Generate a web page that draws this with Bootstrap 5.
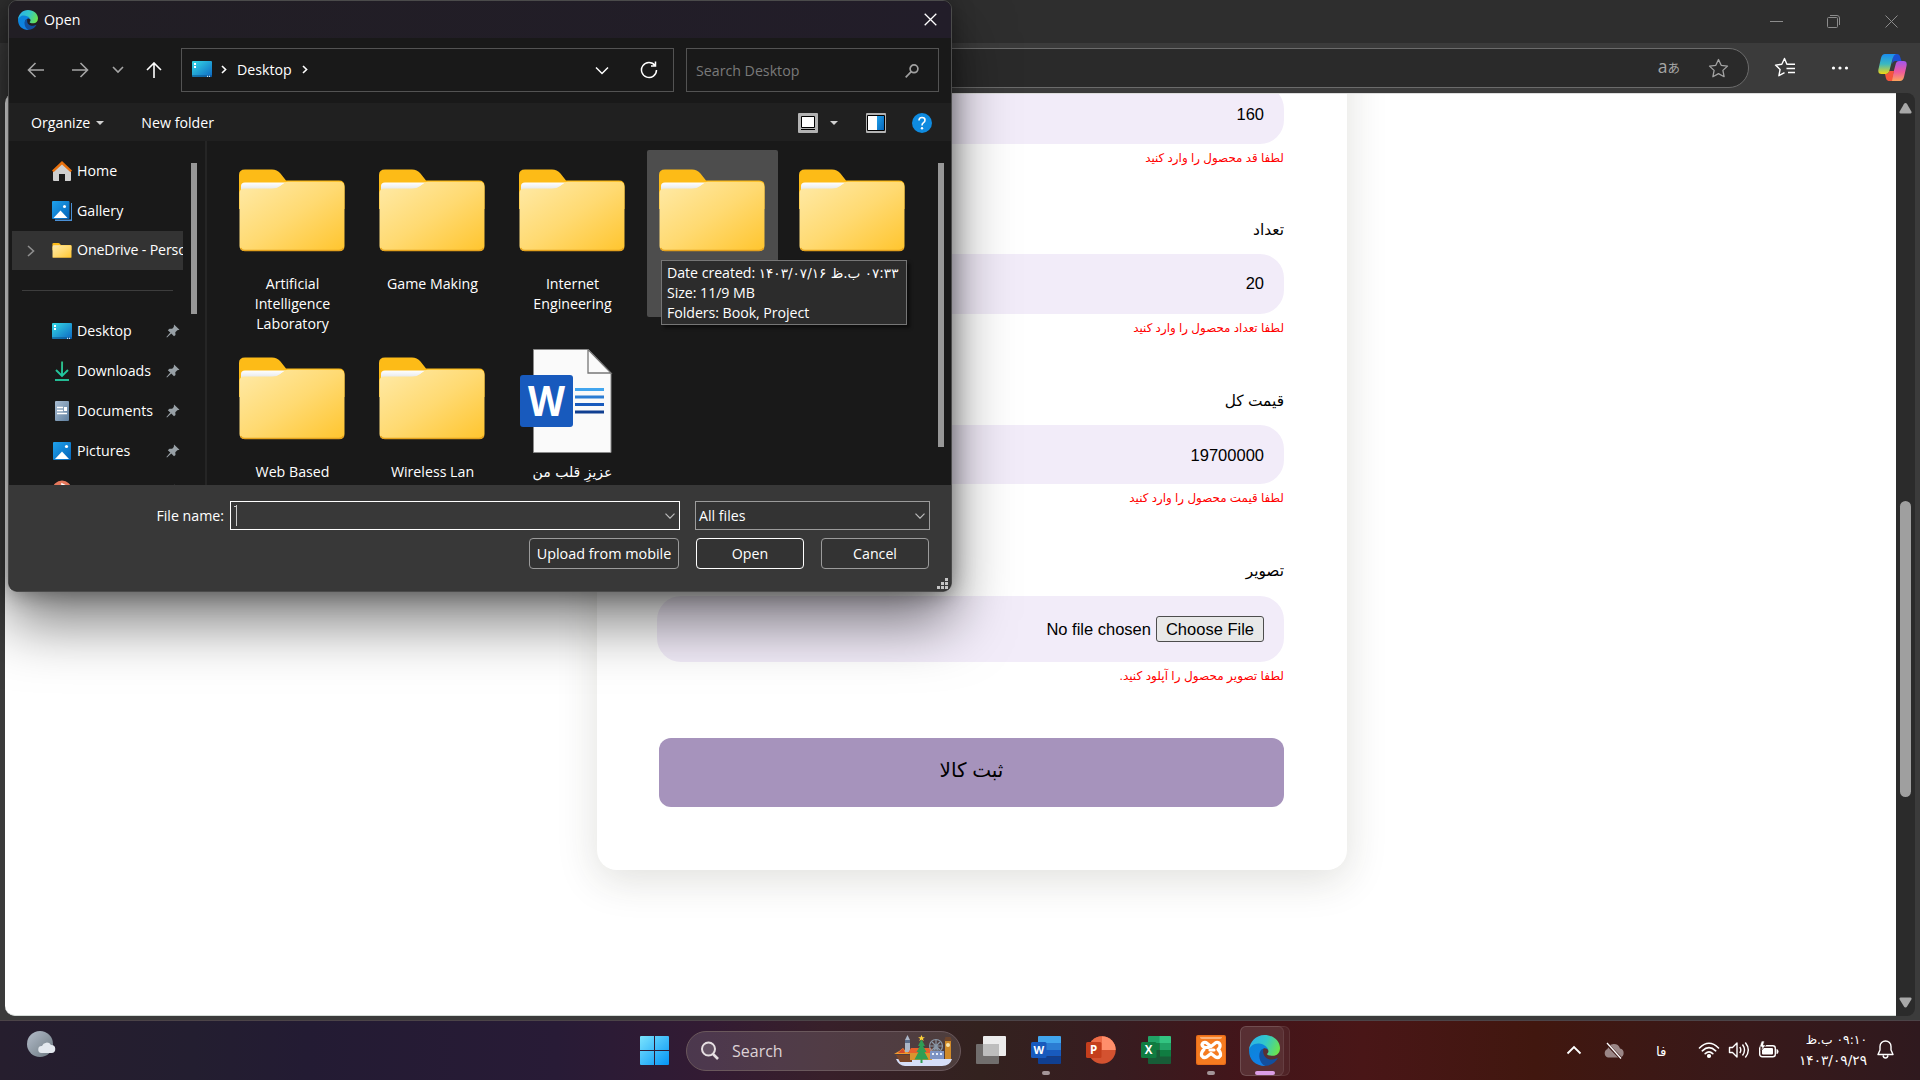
<!DOCTYPE html>
<html lang="en">
<head>
<meta charset="utf-8">
<title>Open</title>
<link href="https://cdn.jsdelivr.net/npm/bootstrap@5.3.0/dist/css/bootstrap.min.css" rel="stylesheet">
<style>
body{width:1920px;height:1080px;overflow:hidden;background:#3b3b3b;font-family:"Open Sans","DejaVu Sans",sans-serif;font-size:14.2px;line-height:20px;color:#fff}
svg{display:block;flex:none}
.win-title{height:43px;background:#2e2e2e;padding-right:21px}
.win-tools{height:50px;background:#3b3b3b;padding-right:13px}
.addr-pill{height:40px;width:1000px;margin-top:5px;border:1px solid #6b6b6b;border-radius:20px;background:#2a2a2a;padding-right:20px}
.viewport-area{height:923px;padding:0 5px}
.page-view{background:#fff;border-radius:10px 0 0 10px;overflow:hidden;border-bottom:1px solid #d5dcd8;border-top:1px solid #ddd}
.page-scroll{width:19px;background:#2b2b2b;border-radius:0 8px 8px 0;padding:10px 0 8px}
.page-thumb{width:11px;height:296px;border-radius:6px;background:#9f9f9f}
.goods-form{width:750px;height:871px;margin:-95px 0 0 592px;padding:86px 63px 0 60px;background:#fff;border-radius:20px;box-shadow:0 10px 40px rgba(50,48,30,.15);color:#000;font-family:"Liberation Sans","DejaVu Sans",sans-serif}
.fld{background:#f2ecf9;border-radius:24px;height:59.5px;padding-right:20px;font-size:16.5px}
.fld-first{height:58.5px;padding-top:0}
.fld-qty{padding-bottom:2px}
.fld-file{height:66px}
.pick-btn{height:26px;border:1px solid #4d4d4d;border-radius:3px;background:#e8e8e8;padding:0 9px;line-height:24px}
.err-line{color:#f00;height:20px;font-size:11.9px;margin-top:4px;white-space:nowrap}
.lbl-line{height:26px;font-size:15.4px;margin:53px 0 8.2px;white-space:nowrap}
.send-btn{height:69px;margin:52px 0 0 2px;border-radius:12px;background:#a693bc;font-size:20px;color:#000;padding-bottom:5px}
/* file dialog */
.dlg{position:absolute;left:8px;top:0;width:944px;height:592px;border:1px solid #4b4b4b;border-radius:9px;background:#191919;overflow:hidden}
.dlg-shadow{position:absolute;left:8px;top:0;width:944px;height:592px;border-radius:9px;box-shadow:0 30px 60px rgba(0,0,0,.52),0 2px 21px rgba(0,0,0,.35)}
.dlg-title{height:37px;background:linear-gradient(90deg,#211e24,#221d29);padding:0 14px 0 9px}
.dlg-nav{height:65px;padding:0 12px 0 18px}
.dlg-box{border:1px solid #535353;height:44px}
.dlg-box>span{margin-top:-1px}
.dlg-tools{height:38px;background:#202020;padding:1px 19px 0 22px}
.dlg-main{height:344px;overflow:hidden}
.side-pane{width:174px;padding-left:3px;overflow:hidden}
.side-row{height:40px;padding-left:40px;white-space:nowrap;width:171px;overflow:hidden;position:relative}
.side-row svg{margin-right:5px}
.side-row .pin{margin:0 3px 0 auto}
.side-row.hot{background:#333;height:39px}
.side-row .exp{position:absolute;left:15px;top:14px}
.side-sep{height:1px;background:#3d3d3d;margin:20px 10px 20px}
.side-scroll{width:23px;padding:22px 0 0 8px}
.thumb-bar{width:6px;background:#979797}
.pane-div{width:2px;background:#252525;margin:0 20px 0 -1px}
.file-grid{width:704px;padding-top:9px;display:grid;grid-template-columns:repeat(5,131px);column-gap:9px;grid-template-rows:167px 167px;row-gap:21px}
.file-cell{padding-top:18.500px;text-align:center}
.file-cell.hot{background:#4d4d4d;border-radius:2px}
.file-cell svg{margin:0 auto 22.500px;position:relative;left:-.5px}
.dlg-foot{height:107px;background:#383838;padding:16px 21px 0 0}
.foot-in{height:29px;border:1px solid #9b9b9b;background:#333;padding:0 4px}
.foot-btn{height:31px;border:1px solid #9b9b9b;border-radius:4px;background:#333;width:108px}
.tip{position:absolute;left:661px;top:260px;width:246px;height:65px;border:1px solid #767676;background:#2c2c2c;padding:2px 5px;box-shadow:3px 3px 3px rgba(0,0,0,.5);white-space:nowrap;color:#fff;letter-spacing:-.05px}
.tip div{height:20px}
/* taskbar */
.tbar{height:60px;border-top:1px solid #4c4448;background:linear-gradient(90deg,#261e2e 0,#231e30 10%,#231b33 16%,#281b36 29%,#331b33 37%,#38202a 43%,#33221f 51%,#371c20 58%,#43151a 65%,#491617 71%,#41170f 80%,#38191a 91%,#2f191e 100%)}
.slot{width:55px;height:58px;position:relative}
.slot svg{margin-top:-1px}
.slot .dotm{position:absolute;left:50%;bottom:5px;width:8px;margin-left:-4px;height:4px;border-radius:2px;background:#a39598}
.slot .dotm.on{width:20px;margin-left:-10px;background:#dc9fe6}
.find-pill{width:275px;height:40px;border-radius:20px;border:1px solid #6a585c;background:rgba(255,255,255,.13);margin:0 2px 0 4px;padding:0 7px 0 15px;font-size:16px}
.app-hot{position:absolute;left:1px;top:4px;width:50px;height:50px;border-radius:6px;background:rgba(255,255,255,.06);border:1px solid rgba(255,255,255,.08)}
.app-hot.front{width:44px}
.clock{width:70px;direction:rtl;font-size:13.7px;font-family:"DejaVu Sans",sans-serif;white-space:nowrap;line-height:20px}
.fa-t{font-family:"DejaVu Sans",sans-serif}
</style>
<script src="https://cdn.jsdelivr.net/npm/bootstrap@5.3.0/dist/js/bootstrap.bundle.min.js"></script>
</head>
<body>
<svg width="0" height="0" class="position-absolute"><defs>
<linearGradient id="gf" x1="0" y1="0" x2="1" y2="1"><stop offset="0" stop-color="#ffeaa8"/><stop offset=".5" stop-color="#ffda72"/><stop offset="1" stop-color="#ffc52e"/></linearGradient>
<linearGradient id="gp" x1="0" y1="0" x2="0" y2="1"><stop offset="0" stop-color="#fff"/><stop offset="1" stop-color="#d8dbe0"/></linearGradient>
<linearGradient id="gd" x1="0" y1="0" x2="1" y2="1"><stop offset="0" stop-color="#36dbe6"/><stop offset="1" stop-color="#0c66c2"/></linearGradient>
<linearGradient id="gb" x1="0" y1="0" x2="1" y2="1"><stop offset="0" stop-color="#1fa2ec"/><stop offset="1" stop-color="#0563b8"/></linearGradient>
<linearGradient id="ge1" x1="0" y1=".3" x2="1" y2=".6"><stop offset="0" stop-color="#2cb1ea"/><stop offset=".5" stop-color="#32c8c9"/><stop offset="1" stop-color="#6be34c"/></linearGradient>
<linearGradient id="ge2" x1="0" y1="0" x2=".6" y2="1"><stop offset="0" stop-color="#0a86d6"/><stop offset="1" stop-color="#1180e8"/></linearGradient>
<linearGradient id="gw" x1="0" y1="0" x2="1" y2="1"><stop offset="0" stop-color="#7be4fd"/><stop offset="1" stop-color="#0494f5"/></linearGradient>
<linearGradient id="gdoc" x1="0" y1="0" x2="1" y2="1"><stop offset="0" stop-color="#a9bdd2"/><stop offset="1" stop-color="#5f7f9f"/></linearGradient>
<linearGradient id="gdl" x1="0" y1="0" x2="0" y2="1"><stop offset="0" stop-color="#2fbd85"/><stop offset="1" stop-color="#1fc7a4"/></linearGradient>
<linearGradient id="gc1" x1="0" y1="0" x2="0" y2="1"><stop offset="0" stop-color="#1a8df0"/><stop offset=".5" stop-color="#3bb8c0"/><stop offset="1" stop-color="#f2d612"/></linearGradient>
<linearGradient id="gc2" x1="0" y1="0" x2="0" y2="1"><stop offset="0" stop-color="#a156ee"/><stop offset=".55" stop-color="#ef5a9c"/><stop offset="1" stop-color="#fca55c"/></linearGradient>
<symbol id="folder" viewBox="0 0 106 83"><path d="M0 6Q0 .5 6 .5H33Q38 .5 41.500 4.500L47 11.500H100Q105.500 11.500 105.500 17V40H0z" fill="#fdbb17"/><path d="M2 24V17Q2 13.500 6 13.500H47L39 19Q37 20.500 34 20.500H6z" fill="url(#gp)"/><path d="M.5 24Q.5 19.800 5.500 19.600H33Q38 19.600 41 17.300L46 13.500Q47 12.800 49 12.800H100Q105.500 12.800 105.500 18V77Q105.500 82 100 82H6Q.5 82 .5 77z" fill="url(#gf)"/><path d="M1.500 79Q3 81.600 6 81.600H100Q103 81.600 104.700 79" fill="none" stroke="#e3a11d" stroke-width="1.500"/></symbol>
<symbol id="edge" viewBox="0 0 24 24"><path d="M22.300 17.800C20.500 21.500 16.500 24 12 24 5 22 6.500 13 11.500 9.500 9.500 15 13 19.300 18 19 20 18.800 21.500 18 22.300 17.800z" fill="#124f9e"/><path d="M0 12C0 7.500 4 6 8 6 12 6 15 9 15 12 14 10 11.500 9.500 9.500 11.500 6.500 15 8 22 12.500 24 5 24 0 19 0 12z" fill="url(#ge2)"/><path d="M0 11.500C.7 5 5.500 0 12 0 19 0 24 5 24 10 24 14 21.500 16 18.500 16 15.500 16 13.800 15.300 14 14.500 15.500 13.300 15.200 11.800 14.300 10.300 12.500 7.500 9.500 6.600 7 6.600 3.500 6.700 1 8.700 0 11.500z" fill="url(#ge1)"/></symbol>
<symbol id="pinS" viewBox="0 0 14 14"><path d="M8 .5l5.500 5.200-2.200.6-2 2 .2 2.700-1.500 1.300-2.700-2.800L1 13.500l-.6-.6 3.900-4.400L1.800 6.200 3.500 4.700l2.700.1 1.600-1.900z" fill="#98a0a6"/></symbol>
<symbol id="deskS" viewBox="0 0 20 16"><rect width="20" height="16" rx="1" fill="url(#gd)"/><path d="M2 2h2v2H2zM2 5h2v2H2z" fill="#fff"/><path d="M0 15h20" stroke="#0a4f86" stroke-width="1"/><path d="M15 15.300h1m1 0h1" stroke="#fff"/></symbol>
</defs></svg>

<div class="d-flex flex-column vh-100">
  <header class="win-title d-flex justify-content-end align-items-center">
    <svg width="130" height="16" viewBox="0 0 130 16" fill="none" stroke="#8c8c8c"><path d="M1 7.500h13"/><path d="M58.500 4.500q0-1 1-1h8q1 0 1 1v8q0 1-1 1h-8q-1 0-1-1zM61 1.500h7q2.500 0 2.500 2.500v7"/><path d="M116.500 1.500l12 12m0-12l-12 12"/></svg>
  </header>
  <div class="win-tools d-flex justify-content-end">
    <div class="addr-pill d-flex justify-content-end align-items-center">
      <div class="d-flex align-items-baseline" style="color:#a6a6a6;font:17px 'Open Sans','Noto Sans CJK JP',sans-serif;margin:-4px 28px 0 0;height:26px;line-height:26px"><span style="font-size:17.500px;line-height:26px">a</span><span style="font-size:12.5px;line-height:20px">あ</span></div>
      <svg width="21" height="21" viewBox="0 0 21 21" fill="none" stroke="#a3a3a3" stroke-width="1.300" stroke-linejoin="round" style="margin-right:-1px"><path d="M10.500 1.500l2.700 5.800 6.300.8-4.600 4.300 1.200 6.300-5.600-3.100-5.600 3.100 1.200-6.300L1.500 8.100l6.300-.8z"/></svg>
    </div>
    <div class="d-flex align-items-center" style="padding-left:25px;margin-top:-1px">
      <svg width="22" height="21" viewBox="0 0 22 21" fill="none" stroke="#fff" stroke-width="1.400" stroke-linejoin="round"><path d="M13.500 7.300l-.6-.1L10.500 1.500 7.800 7.300 1.500 8.100l4.600 4.300-1.200 6.300 5.600-3.100M13.500 7.300H21M12.500 11.500H21M14 15.500h7"/></svg>
      <svg width="18" height="6" viewBox="0 0 18 6" fill="#fff" style="margin:0 29px 0 35px"><circle cx="2.500" cy="3" r="1.600"/><circle cx="9" cy="3" r="1.600"/><circle cx="15.500" cy="3" r="1.600"/></svg>
      <svg width="29" height="27" viewBox="0 0 29 27"><path d="M15 0h4q2.500 0 3.200 3l1.300 4H17.500q-2.500 0-3.500 3z" fill="#1b4fd0"/><path d="M7 0h11q-2.500 1-3.200 4L11 18q-.8 2-3 2H3.500Q-.5 20 .5 15L3 4Q4 0 7 0z" fill="url(#gc1)"/><path d="M22 27H11q2.500-1 3.200-4L18 9q.8-2 3-2h4.500q4 0 3 5L26 23q-1 4-4 4z" fill="url(#gc2)"/><path d="M14 27h-3.500q-2 0-2.600-3L7 20h1q2.500 0 3.300-3H16z" fill="#f5553c"/></svg>
    </div>
  </div>
  <main class="viewport-area d-flex">
    <div class="page-view flex-grow-1">
      <form class="goods-form" dir="rtl">
        <div class="fld fld-first d-flex align-items-center">160</div>
        <div class="err-line">لطفا قد محصول را وارد کنید</div>
        <div class="lbl-line" style="margin-top:52.500px">تعداد</div>
        <div class="fld fld-qty d-flex align-items-center">20</div>
        <div class="err-line">لطفا تعداد محصول را وارد کنید</div>
        <div class="lbl-line">قیمت کل</div>
        <div class="fld d-flex align-items-center">19700000</div>
        <div class="err-line">لطفا قیمت محصول را وارد کنید</div>
        <div class="lbl-line">تصویر</div>
        <div class="fld fld-file d-flex align-items-center"><span class="pick-btn">Choose File</span><span style="margin-right:5px">No file chosen</span></div>
        <div class="err-line" style="font-size:12.1px">لطفا تصویر محصول را آپلود کنید.</div>
        <div class="send-btn d-flex justify-content-center align-items-center">ثبت کالا</div>
      </form>
    </div>
    <div class="page-scroll d-flex flex-column align-items-center">
      <svg width="13" height="11" viewBox="0 0 13 11"><path d="M6.500 0q1 0 1.700 1.200l4.300 7.600Q13 10.500 11.500 10.500h-10Q0 10.500.5 8.800L4.800 1.200Q5.500 0 6.500 0z" fill="#a8a8a8"/></svg>
      <div class="page-thumb" style="margin-top:387px"></div>
      <svg class="mt-auto" width="13" height="11" viewBox="0 0 13 11"><path d="M6.500 10.500q1 0 1.700-1.200l4.300-7Q13 .5 11.500.5h-10Q0 .5.5 2.300l4.300 7Q5.500 10.500 6.500 10.500z" fill="#a8a8a8"/></svg>
    </div>
  </main>
  <footer class="tbar mt-auto d-flex align-items-center">
    <svg width="29" height="27" viewBox="0 0 29 27" style="margin:-13px 0 0 27px"><defs><linearGradient id="gm" x1="0" y1="0" x2="1" y2="1"><stop offset="0" stop-color="#b4bdca"/><stop offset="1" stop-color="#6b7880"/></linearGradient></defs><circle cx="13" cy="13" r="13" fill="url(#gm)"/><path d="M14.500 22a3.500 3.500 0 01.5-7 5 5 0 019-1 4 4 0 01.5 8z" fill="#e3e8ee"/></svg>
    <div class="d-flex align-items-center" style="margin-left:571px">
      <div class="slot d-flex align-items-center justify-content-center"><svg width="29" height="29" viewBox="0 0 29 29"><path d="M0 1q0-1 1-1h13v14H0zM15 0h13q1 0 1 1v13H15zM0 15h14v14H1q-1 0-1-1zM15 15h14v13q0 1-1 1H15z" fill="url(#gw)"/></svg></div>
      <div class="find-pill d-flex align-items-center">
        <svg width="18" height="19" viewBox="0 0 18 19" fill="none" stroke="#e6dfe2" stroke-width="2" style="margin-left:-1px"><circle cx="7.500" cy="8" r="6.500" fill="#ffffff22"/><path d="M12 13l5 5" stroke-width="2.600"/></svg>
        <span style="margin-left:13px;color:#ddd2d6">Search</span>
        <svg class="ms-auto" width="60" height="32" viewBox="0 0 60 32"><path d="M3 24H59Q57 31 49 31H12Q6 31 3 24z" fill="#d6dff8"/><path d="M3 20h16v7H7z" fill="#7a4528"/><path d="M1 19q6-3 9-6 3 4 9 6z" fill="#f19a2e"/><path d="M5 18l5-5 2 5z" fill="#d44a2a"/><path d="M12 5l2.500-5L17 5v12h-5z" fill="#aab6c8"/><path d="M12 5h5v3h-5z" fill="#596c8a"/><path d="M15 18l3-5h20l3 5z" fill="#e8602c"/><path d="M17 18h22v7H17z" fill="#d9952f"/><g fill="none" stroke="#8a98a8" stroke-width="1.200"><circle cx="43" cy="11" r="6.500"/><path d="M37 11h12M43 5v12M39 7l8 8M47 7l-8 8M39 20l4-9 4 9"/></g><path d="M37 16h14v8H37z" fill="#7d93c4"/><path d="M39 18h2v2h-2zm4 0h2v2h-2zm4 0h2v2h-2z" fill="#e7edf8"/><path d="M52 6h6v18h-6z" fill="#d08a28"/><path d="M51 6l1.500-4h5L59 6z" fill="#6d452c"/><circle cx="55" cy="10" r="2" fill="#f8e5b0"/><path d="M28.500 4l3.500 7h-2l3.500 6h-2l4 7.500h-6V28h-2v-3.500h-6l4-7.500h-2l3.500-6h-2z" fill="#2f9e54"/><path d="M28.500 0l1 2.200h2.400l-2 1.500.8 2.300-2.200-1.400L26.300 6l.8-2.300-2-1.500h2.400z" fill="#ffd23a"/></svg>
      </div>
      <div class="slot d-flex align-items-center justify-content-center"><svg width="30" height="28" viewBox="0 0 30 28"><rect x="7" width="23" height="20" rx="1" fill="#ececec"/><rect y="8" width="23" height="20" rx="1" fill="#7d7b7b" fill-opacity=".85"/><path d="M7 8h16v12H8q-1 0-1-1z" fill="#bdbdbd"/></svg></div>
      <div class="slot d-flex align-items-center justify-content-center"><svg width="30" height="28" viewBox="0 0 30 28"><path d="M7 1q0-1 1-1h21q1 0 1 1v6H7z" fill="#41a5ee"/><path d="M7 7h23v7H7z" fill="#2b7cd3"/><path d="M7 14h23v6.500H7z" fill="#185abd"/><path d="M7 20.500h23V27q0 1-1 1H8q-1 0-1-1z" fill="#103f91"/><rect y="6" width="15.500" height="16" rx="1.500" fill="#185abd"/><text x="7.700" y="18" text-anchor="middle" font-size="11" font-weight="700" font-family="Open Sans" fill="#fff">W</text></svg><i class="dotm"></i></div>
      <div class="slot d-flex align-items-center justify-content-center"><svg width="30" height="28" viewBox="0 0 30 28"><circle cx="16" cy="14" r="13.700" fill="#d35230"/><path d="M16 .3A13.700 13.700 0 0129.700 14H16z" fill="#ff8f6b"/><path d="M16 .3A13.700 13.700 0 002.300 14H16z" fill="#ed6c47"/><rect y="6" width="15.500" height="16" rx="1.500" fill="#c43e1c"/><text x="7.700" y="18" text-anchor="middle" font-size="11.500" font-weight="700" font-family="Open Sans" fill="#fff">P</text></svg></div>
      <div class="slot d-flex align-items-center justify-content-center"><svg width="30" height="28" viewBox="0 0 30 28"><path d="M7 1q0-1 1-1h11v7H7z" fill="#21a366"/><path d="M18.500 0H29q1 0 1 1v6H18.500z" fill="#33c481"/><path d="M7 7h11.500v7H7z" fill="#107c41"/><path d="M18.500 7H30v7H18.500z" fill="#21a366"/><path d="M7 14h11.500v7H7z" fill="#185c37"/><path d="M18.500 14H30v7H18.500z" fill="#107c41"/><path d="M7 20.500h23V27q0 1-1 1H8q-1 0-1-1z" fill="#185c37"/><rect y="6" width="15.500" height="16" rx="1.500" fill="#107c41"/><text x="7.700" y="18" text-anchor="middle" font-size="11.500" font-weight="700" font-family="Open Sans" fill="#fff">X</text></svg></div>
      <div class="slot d-flex align-items-center justify-content-center"><svg width="30" height="30" viewBox="0 0 30 30"><rect width="30" height="30" rx="2" fill="#e86c1a"/><rect x="1" y="1" width="28" height="28" rx="2" fill="#f57b20"/><path d="M4 2h22q0 2-3 2H7Q4 4 4 2z" fill="#fbb27c"/><g fill="none" stroke="#fff" stroke-width="3.200" stroke-linejoin="round" stroke-linecap="round"><path d="M12.500 12.500L9.500 12.500Q6 12 6 9.500 7 7 10 7.500L15 11.500 20 7.500Q23 7 24 9.500 24.500 12.500 22 14.500 25 17 24.500 20.500 22.500 23.500 19.500 22L15 18.500 10.500 22Q7.500 23.500 5.500 20.500 5 17 8 14.500"/><path d="M14 15h4"/></g></svg><i class="dotm"></i></div>
      <div class="slot d-flex align-items-center justify-content-center" style="left:1px"><div class="app-hot"></div><div class="app-hot front"></div><svg width="31" height="31" style="margin-right:4px;position:relative"><use href="#edge"/></svg><i class="dotm on" style="margin-left:-12px"></i></div>
    </div>
    <div class="d-flex align-items-center ms-auto" style="padding-right:26px;margin-top:-2px">
      <svg width="16" height="10" viewBox="0 0 16 10" fill="none" stroke="#fff" stroke-width="1.800"><path d="M1.500 8.500L8 2l6.500 6.500"/></svg>
      <svg width="22" height="20" viewBox="0 0 22 20" style="margin:2px 31px 0 21px"><path d="M5 16.500A4.500 4.500 0 014.500 8 6.500 6.500 0 0117 7.500a4.600 4.600 0 010 9z" fill="#9a8686"/><path d="M3 2l15.500 16" stroke="#3d1815" stroke-width="3"/><path d="M4 2l14 15.500" stroke="#fff" stroke-width="1.300"/></svg>
      <span class="fa-t" style="font-size:13.5px;width:13px;margin-right:29px;margin-top:2px">فا</span>
      <svg width="22" height="18" viewBox="0 0 22 18" fill="none" stroke="#fff" stroke-width="1.600" stroke-linecap="round"><path d="M1.500 7Q11-2.500 20.500 7M4.300 9.800q6.700-6.300 13.400 0M7.200 12.600q3.800-3.500 7.600 0"/><circle cx="11" cy="15" r="1.300" fill="#fff"/></svg>
      <svg width="22" height="18" viewBox="0 0 22 18" fill="none" stroke="#fff" stroke-width="1.400" stroke-linejoin="round" style="margin:0 8px"><path d="M1.500 6.500h3L9 2v14l-4.500-4.500h-3zM11.800 6q2 3 0 6M14.500 3.500q4 5.500 0 11M17.300 1.500q6 7.500 0 15"/></svg>
      <svg width="21" height="18" viewBox="0 0 21 18"><rect x="1.700" y="4.700" width="15.600" height="11" rx="2.500" fill="none" stroke="#fff" stroke-width="1.400"/><path d="M18.500 8v5q2 0 2-2.500t-2-2.500" fill="#fff"/><rect x="4" y="7" width="11" height="6.500" rx="1" fill="#fff"/><path d="M3.500 0h3L5.500 4H8l-5 6 1-4H1.500z" fill="#fff" stroke="#351a1a" stroke-width=".7"/></svg>
      <div class="clock" style="margin-left:18px;margin-right:10px;margin-top:1px"><div style="font-size:12.300px">۰۹:۱۰ ب.ظ</div><div>۱۴۰۳/۰۹/۲۹</div></div>
      <svg width="17" height="19" viewBox="0 0 17 19" fill="none" stroke="#fff" stroke-width="1.400" stroke-linejoin="round"><path d="M8.500 1a5.500 5.500 0 00-5.500 5.500V10l-2 4.500h15L14 10V6.500A5.500 5.500 0 008.500 1zM6 15.500q.5 2.500 2.500 2.500t2.500-2.500"/></svg>
    </div>
  </footer>
</div>

<div class="dlg-shadow"></div>
<section class="dlg">
  <div class="dlg-title d-flex align-items-center"><svg width="20" height="20"><use href="#edge"/></svg><span style="margin-left:6px">Open</span>
    <svg class="ms-auto" width="13" height="13" viewBox="0 0 13 13" stroke="#fff" stroke-width="1.300"><path d="M.7.700l11.600 11.600m0-11.600L.7 12.300"/></svg></div>
  <div class="dlg-nav d-flex align-items-center">
    <svg width="17" height="16" viewBox="0 0 17 16" fill="none" stroke="#a5a5a5" stroke-width="1.600" style="margin-top:-1px"><path d="M17 8H2M8.500 1L1.500 8l7 7"/></svg>
    <svg width="17" height="16" viewBox="0 0 17 16" fill="none" stroke="#a5a5a5" stroke-width="1.600" style="margin:-1px 0 0 28px"><path d="M0 8h15M8.500 1l7 7-7 7"/></svg>
    <svg width="12" height="8" viewBox="0 0 12 8" fill="none" stroke="#a5a5a5" stroke-width="1.600" style="margin:-1px 0 0 23px"><path d="M1 1l5 5 5-5"/></svg>
    <svg width="16" height="17" viewBox="0 0 16 17" fill="none" stroke="#fff" stroke-width="1.600" style="margin-left:22px"><path d="M8 16V1M1 8l7-7 7 7"/></svg>
    <div class="dlg-box d-flex align-items-center" style="width:493px;margin:-1px 0 0 19px;padding:0 15px 0 10px">
      <svg width="20" height="16" style="margin-bottom:3px"><use href="#deskS"/></svg>
      <svg width="6" height="9" viewBox="0 0 6 9" fill="none" stroke="#fff" stroke-width="1.600" style="margin:-1px 10px 0 9px"><path d="M1 1l3.600 3.500L1 8"/></svg><span>Desktop</span>
      <svg width="6" height="9" viewBox="0 0 6 9" fill="none" stroke="#fff" stroke-width="1.600" style="margin:-1px 0 0 10px"><path d="M1 1l3.600 3.500L1 8"/></svg>
      <svg class="ms-auto" width="14" height="9" viewBox="0 0 14 9" fill="none" stroke="#fff" stroke-width="1.500"><path d="M1 1.500l6 6 6-6"/></svg>
      <svg width="18" height="18" viewBox="0 0 18 18" fill="none" stroke="#fff" stroke-width="1.500" style="margin-left:31px"><path d="M15 4.500A7.500 7.500 0 1016.500 9M15.500.5v4.500H11"/></svg>
    </div>
    <div class="dlg-box d-flex align-items-center ms-auto" style="width:253px;margin-top:-1px;padding:1px 19px 0 9px;color:#7a7a7a">Search Desktop
      <svg class="ms-auto" width="14" height="14" viewBox="0 0 14 14" fill="none" stroke="#a0a0a0" stroke-width="1.700"><circle cx="9" cy="4.800" r="3.900"/><path d="M6.200 7.700L.7 13.300"/></svg></div>
  </div>
  <div class="dlg-tools d-flex align-items-center">Organize<svg width="8" height="4" viewBox="0 0 8 4" style="margin:0 37px 0 6px"><path d="M0 0h8L4 4z" fill="#d0d0d0"/></svg>New folder
    <svg class="ms-auto" width="20" height="20" viewBox="0 0 20 20"><rect width="20" height="20" rx="1" fill="#b3b3b3"/><path d="M3.500 3.500h13v11h-13z" fill="#fff" stroke="#000"/><path d="M3 16.500h14" stroke="#000"/></svg>
    <svg width="8" height="4" viewBox="0 0 8 4" style="margin:0 28px 0 12px"><path d="M0 0h8L4 4z" fill="#d0d0d0"/></svg>
    <svg width="20" height="20" viewBox="0 0 20 20"><rect width="20" height="20" rx="1" fill="#b3b3b3"/><path d="M1.500 2.500h17v15h-17z" fill="#fff" stroke="#000"/><path d="M11 3h7v14h-7z" fill="url(#gb)"/></svg>
    <svg width="20" height="20" viewBox="0 0 20 20" style="margin-left:26px"><circle cx="10" cy="10" r="10" fill="#0f8be0"/><path d="M7 7.500q0-3 3-3t3 2.500q0 1.700-1.500 2.700-1.500 1-1.500 2.800" fill="none" stroke="#fff" stroke-width="1.600"/><circle cx="10" cy="15.200" r="1.200" fill="#fff"/></svg>
  </div>
  <div class="dlg-main d-flex">
    <div class="side-pane" style="padding-top:9.500px">
      <div class="side-row d-flex align-items-center"><svg width="20" height="20" viewBox="0 0 20 20"><path d="M1 9.500l9-8 9 8V19q0 1-1 1h-5v-7H7v7H2q-1 0-1-1z" fill="#cfcfcf"/><path d="M0 9.500L10 0l10 9.500-1.500 1.700L10 3.500l-8.500 7.700z" fill="#e8700c"/></svg>Home</div>
      <div class="side-row d-flex align-items-center"><svg width="20" height="20" viewBox="0 0 20 20"><path d="M19 2v16.500H3V20h17V2z" fill="#4a90d6"/><rect width="17.500" height="18" rx="1" fill="url(#gb)"/><path d="M1.500 17l7-7.500 7 7.500z" fill="#fff"/><circle cx="12.500" cy="5.500" r="1.500" fill="#fff"/></svg>Gallery</div>
      <div class="side-row hot d-flex align-items-center"><svg class="exp" width="8" height="12" viewBox="0 0 8 12" fill="none" stroke="#8f8f8f" stroke-width="1.600"><path d="M1 1l5.500 5L1 11"/></svg><svg width="20" height="15"><use href="#folder"/></svg><span style="letter-spacing:-.15px">OneDrive - Personal</span></div>
      <div class="side-sep"></div>
      <div class="side-row d-flex align-items-center"><svg width="20" height="16"><use href="#deskS"/></svg>Desktop<svg class="pin" width="14" height="14"><use href="#pinS"/></svg></div>
      <div class="side-row d-flex align-items-center"><svg width="20" height="20" viewBox="0 0 20 20" fill="none" stroke="url(#gdl)" stroke-width="1.900"><path d="M10.100.500L10 14.500M4 9l6 6 6-6" /><path d="M3 19h14" stroke="#25c49c"/></svg>Downloads<svg class="pin" width="14" height="14"><use href="#pinS"/></svg></div>
      <div class="side-row d-flex align-items-center"><svg width="20" height="20" viewBox="0 0 20 20"><rect x="3" width="14" height="20" rx="1" fill="url(#gdoc)"/><path d="M5 6.500h6M5 9.500h6M5 12.500h10" stroke="#fff" stroke-width="1.400"/><path d="M12 6h3v4h-3z" fill="#fff"/></svg>Documents<svg class="pin" width="14" height="14"><use href="#pinS"/></svg></div>
      <div class="side-row d-flex align-items-center"><svg width="20" height="18" viewBox="0 0 20 18"><rect x="1" width="18" height="18" rx="1" fill="url(#gb)"/><path d="M3 17l7-7.500 7 7.500z" fill="#fff"/><circle cx="14.500" cy="4.500" r="1.600" fill="#fff"/></svg>Pictures<svg class="pin" width="14" height="14"><use href="#pinS"/></svg></div>
      <div class="side-row d-flex align-items-center"><svg width="20" height="22" viewBox="0 0 20 22"><circle cx="10" cy="10" r="9.500" fill="#e5785c"/><path d="M10 14V4l4 2" fill="none" stroke="#fff" stroke-width="1.500"/></svg><svg class="pin" width="14" height="14"><use href="#pinS"/></svg></div>
    </div>
    <div class="side-scroll"><div class="thumb-bar" style="height:151px"></div></div>
    <div class="pane-div"></div>
    <div class="file-grid">
      <div class="file-cell"><svg width="106" height="83"><use href="#folder"/></svg>Artificial<br>Intelligence<br>Laboratory</div>
      <div class="file-cell"><svg width="106" height="83"><use href="#folder"/></svg>Game Making</div>
      <div class="file-cell"><svg width="106" height="83"><use href="#folder"/></svg>Internet<br>Engineering</div>
      <div class="file-cell hot"><svg width="106" height="83"><use href="#folder"/></svg></div>
      <div class="file-cell"><svg width="106" height="83"><use href="#folder"/></svg></div>
      <div class="file-cell"><svg width="106" height="83"><use href="#folder"/></svg>Web Based</div>
      <div class="file-cell"><svg width="106" height="83"><use href="#folder"/></svg>Wireless Lan</div>
      <div class="file-cell" style="padding-top:11px"><svg width="106" height="104" viewBox="0 0 106 104" style="margin-bottom:9px"><path d="M14.500.5H69L92 24v79.500H14.500z" fill="#fafafa" stroke="#8a8a8a"/><path d="M69 .5V24h23z" fill="#fafafa" stroke="#777" stroke-width="1.300"/><rect x="1" y="26" width="53" height="52" rx="3" fill="#185abd"/><text x="27.500" y="66.500" text-anchor="middle" textLength="37" lengthAdjust="spacingAndGlyphs" font-size="41" font-weight="700" font-family="Open Sans" fill="#fff">W</text><path d="M56 40.500h29" stroke="#41a5ee" stroke-width="3"/><path d="M56 48h29" stroke="#2b7cd3" stroke-width="3"/><path d="M56 55.500h29" stroke="#185abd" stroke-width="3"/><path d="M56 63h29" stroke="#103f91" stroke-width="3"/></svg><span class="fa-t" dir="rtl" style="font-size:14px">عزیزِ قلب من</span></div>
    </div>
    <div style="width:0;margin-left:7px;padding-top:22px"><div class="thumb-bar" style="height:284px"></div></div>
  </div>
  <div class="dlg-foot">
    <div class="d-flex justify-content-end"><span style="margin:5px 6px 0 0">File name:</span>
      <div class="foot-in d-flex align-items-center" style="width:450px;margin-right:15px;border-color:#fff;background:#383838"><svg width="4" height="21" viewBox="0 0 4 21" stroke="#ccc" style="margin-left:-1px"><path d="M2.500 0v21M0 1.500h2"/></svg><svg class="ms-auto" width="10" height="6" viewBox="0 0 10 6" fill="none" stroke="#bbb" stroke-width="1.200"><path d="M.5.700L5 5.200 9.500.700"/></svg></div>
      <div class="foot-in d-flex align-items-center" style="width:235px;padding-left:3px">All files<svg class="ms-auto" width="10" height="6" viewBox="0 0 10 6" fill="none" stroke="#bbb" stroke-width="1.200"><path d="M.5.700L5 5.200 9.500.700"/></svg></div></div>
    <div class="d-flex justify-content-end mt-2" style="padding-right:1px">
      <div class="foot-btn d-flex justify-content-center align-items-center text-nowrap" style="width:150px;font-size:14.4px">Upload from mobile</div>
      <div class="foot-btn d-flex justify-content-center align-items-center" style="margin:0 17px;border-color:#fff">Open</div>
      <div class="foot-btn d-flex justify-content-center align-items-center">Cancel</div></div>
    <svg class="ms-auto" width="11" height="11" viewBox="0 0 11 11" style="margin-top:9px;margin-right:-18px" fill="#c4c4c4"><path d="M8 0h3v3H8zM8 4h3v3H8zM4 4h3v3H4zM0 8h3v3H0zM4 8h3v3H4zM8 8h3v3H8z"/></svg>
  </div>
</section>
<div class="tip"><div>Date created: <span class="fa-t" style="font-size:13.6px"><bdi>۱۴۰۳/۰۷/۱۶</bdi> <bdi>ب.ظ</bdi> <bdi>۰۷:۳۳</bdi></span></div><div>Size: 11/9 MB</div><div>Folders: Book, Project</div></div>
</body>
</html>
